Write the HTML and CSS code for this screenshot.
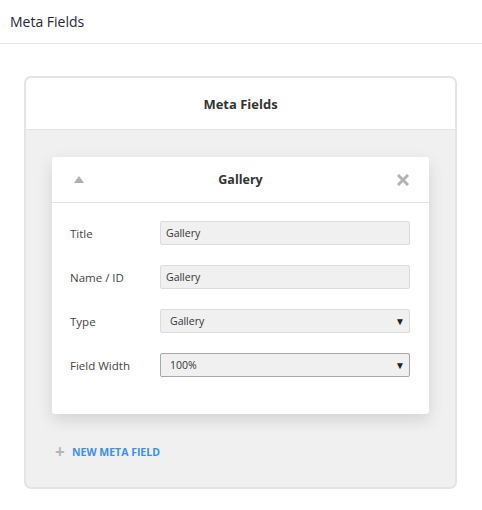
FILE: index.html
```html
<!DOCTYPE html>
<html>
<head>
<meta charset="utf-8">
<link rel="stylesheet" href="styles.css">
</head>
<body>
<header class="topbar">Meta Fields</header>
<main class="page">
  <section class="panel">
    <div class="panel-head">Meta Fields</div>
    <div class="panel-body">
      <div class="card">
        <div class="card-head">
          <span class="icon-up"></span>
          <span class="card-title">Gallery</span>
          <svg class="icon-x" width="12" height="12" viewBox="0 0 12 12"><path d="M2 2 L10 10 M10 2 L2 10" stroke="#b3b3b3" stroke-width="3" stroke-linecap="square"/></svg>
        </div>
        <div class="card-body">
          <div class="row"><label class="lbl">Title</label><div class="input">Gallery</div></div>
          <div class="row"><label class="lbl">Name / ID</label><div class="input">Gallery</div></div>
          <div class="row"><label class="lbl">Type</label><div class="input select">Gallery<span class="caret">▼</span></div></div>
          <div class="row"><label class="lbl">Field Width</label><div class="input select dark">100%<span class="caret">▼</span></div></div>
        </div>
      </div>
      <div class="add"><span class="plus">+</span><span class="add-text">NEW META FIELD</span></div>
    </div>
  </section>
</main>
</body>
</html>
```
FILE: styles.css
```css
* { box-sizing: border-box; }
html, body { margin: 0; padding: 0; background: #fff; }
body { font-family: "Open Sans", "Segoe UI", sans-serif; color: #333; }
.topbar {
  height: 44px;
  padding: 0 10px;
  display: flex;
  align-items: center;
  font-size: 14px;
  color: #1f2937;
  border-bottom: 1px solid #e6e6e6;
}
.page { padding: 32px 25px 0 24px; }
.panel {
  border: 2px solid #e4e4e4;
  border-radius: 7px;
  overflow: hidden;
  background: #f0f0f0;
}
.panel-head {
  height: 52px;
  background: #fff;
  border-bottom: 1px solid #e4e4e4;
  display: flex;
  align-items: center;
  justify-content: center;
  font-weight: 700;
  font-size: 13px;
  color: #333;
}
.panel-body { padding: 27px 26px 0 26px; height: 357px; }
.card {
  background: #fff;
  border-radius: 3px;
  box-shadow: 0 6px 16px rgba(0,0,0,0.12);
}
.card-head {
  height: 46px;
  border-bottom: 1px solid #e3e3e3;
  display: flex;
  align-items: center;
  padding: 0 20px 0 22px;
}
.icon-up {
  width: 0; height: 0;
  border-left: 5px solid transparent;
  border-right: 5px solid transparent;
  border-bottom: 7px solid #b0b0b0;
}
.card-title { flex: 1; text-align: center; font-weight: 700; font-size: 12.5px; color: #333; }
.icon-x { display: block; }
.card-body { padding: 18px 19px 37px 18px; display: flex; flex-direction: column; gap: 19px; }
.row { display: flex; align-items: center; height: 24px; }
.row + .row { margin-top: 1px; }
.lbl { width: 90px; font-size: 11.5px; color: #444; }
.input {
  flex: 1;
  height: 24px;
  background: #f0f0f0;
  border: 1px solid #dcdcdc;
  border-radius: 2px;
  font-size: 10.5px;
  color: #333;
  display: flex;
  align-items: center;
  padding: 0 5px;
}
.select { padding-left: 9px; position: relative; }
.select.dark { border-color: #a8a8a8; }
.caret { position: absolute; right: 4px; font-size: 10px; color: #222; }
.add { display: flex; align-items: center; margin-top: 29px; padding-left: 3px; }
.plus { color: #b5b5b5; font-size: 17px; font-weight: 700; width: 17px; line-height: 1; }
.add-text { color: #3d8fe8; font-size: 10.5px; font-weight: 700; }
```
